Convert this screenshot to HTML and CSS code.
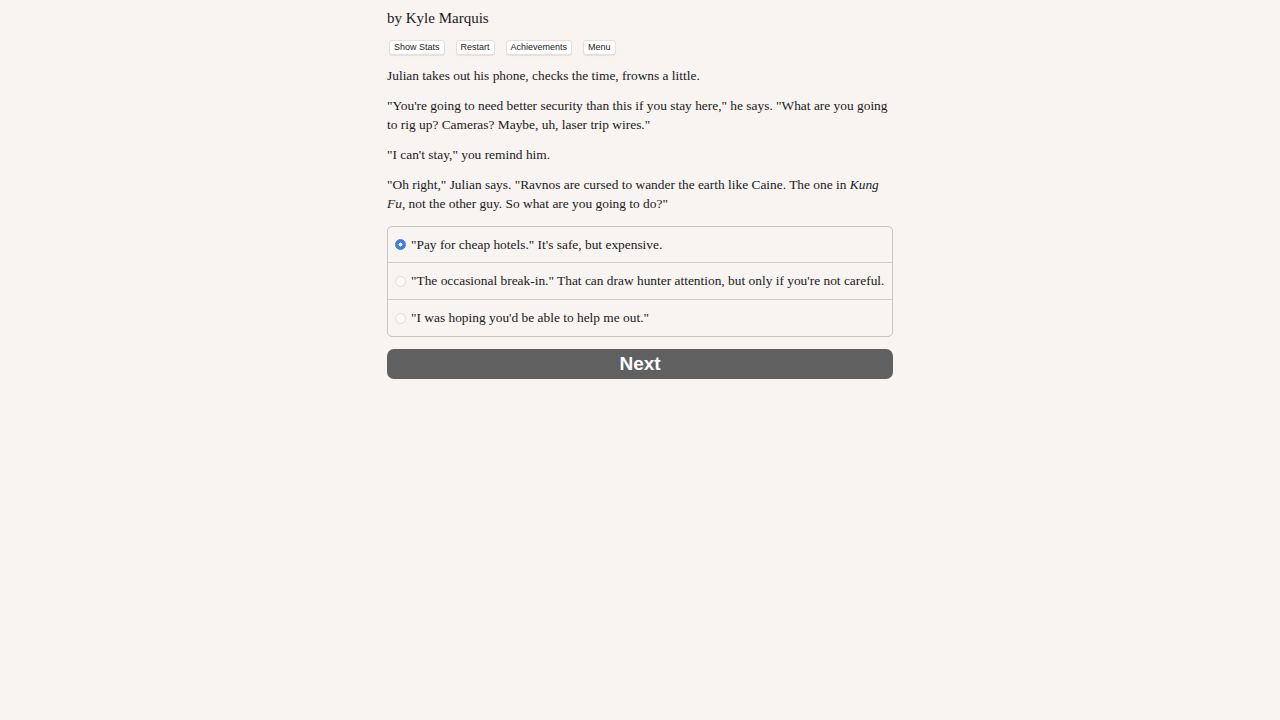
FILE: index.html
```html
<!DOCTYPE html>
<html lang="en">
<head>
    <meta charset="UTF-8">
    <title>Kyle Marquis</title>
    <link rel="stylesheet" href="styles.css">
</head>
<body>
    <div class="container">
        <div class="author">by Kyle Marquis</div>

        <div class="buttons">
            <button class="spacedLink">Show Stats</button>
            <button class="spacedLink">Restart</button>
            <button class="spacedLink">Achievements</button>
            <button class="spacedLink">Menu</button>
        </div>

        <div id="text">
            <p>Julian takes out his phone, checks the time, frowns a little.</p>
            <p>"You're going to need better security than this if you stay here," he says. "What are you going to rig up? Cameras? Maybe, uh, laser trip wires."</p>
            <p>"I can't stay," you remind him.</p>
            <p>"Oh right," Julian says. "Ravnos are cursed to wander the earth like Caine. The one in <i>Kung Fu</i>, not the other guy. So what are you going to do?"</p>
        </div>

        <form class="choice">
            <label class="option">
                <input type="radio" name="choice" checked>
                <span>"Pay for cheap hotels." It's safe, but expensive.</span>
            </label>
            <label class="option">
                <input type="radio" name="choice">
                <span>"The occasional break-in." That can draw hunter attention, but only if you're not careful.</span>
            </label>
            <label class="option">
                <input type="radio" name="choice">
                <span>"I was hoping you'd be able to help me out."</span>
            </label>
        </form>

        <button class="next">Next</button>
    </div>
</body>
</html>
```

FILE: styles.css
```css
body {
    margin: 0;
    background-color: #f7f4f1;
    color: #1a1a1a;
    font-family: "Liberation Serif", serif;
}

.container {
    width: 506px;
    margin: 0 auto;
    padding-top: 8px;
}

.author {
    font-size: 15px;
    line-height: 20px;
}

.buttons {
    display: flex;
    gap: 11px;
    margin: 12px 0 0 2px;
}

.spacedLink {
    font-family: "Liberation Sans", sans-serif;
    font-size: 9px;
    padding: 1px 4px;
    background: #fff;
    color: #222;
    border: 1px solid #e2dfdc;
    border-radius: 3px;
    line-height: 11px;
    box-shadow: 0 1px 1px rgba(0, 0, 0, 0.08);
}

#text p {
    font-size: 13.4px;
    line-height: 19px;
    margin: 11px 0 0;
}

.choice {
    margin: 13px 0 0;
    border: 1px solid #c8c6c3;
    border-radius: 5px;
    font-size: 13.4px;
}

.option {
    display: flex;
    align-items: center;
    height: 36px;
    padding: 0 7px;
    border-top: 1px solid #cfccc9;
}

.option:first-child {
    height: 35px;
    border-top: none;
}

.option input {
    appearance: none;
    width: 11px;
    height: 11px;
    margin: 0 5px 0 0;
    border: 1px solid #e0dedc;
    border-radius: 50%;
    background: #fbfaf9;
}

.option input:checked {
    border-color: #3d7fe0;
    background: radial-gradient(circle, #fff 0 1.8px, #3d7fe0 2.2px);
}

.next {
    display: block;
    width: 100%;
    height: 30px;
    margin-top: 12px;
    border: none;
    border-radius: 7px;
    background-color: #616060;
    color: #fff;
    font-family: "Liberation Sans", sans-serif;
    font-weight: bold;
    font-size: 19px;
}
```
